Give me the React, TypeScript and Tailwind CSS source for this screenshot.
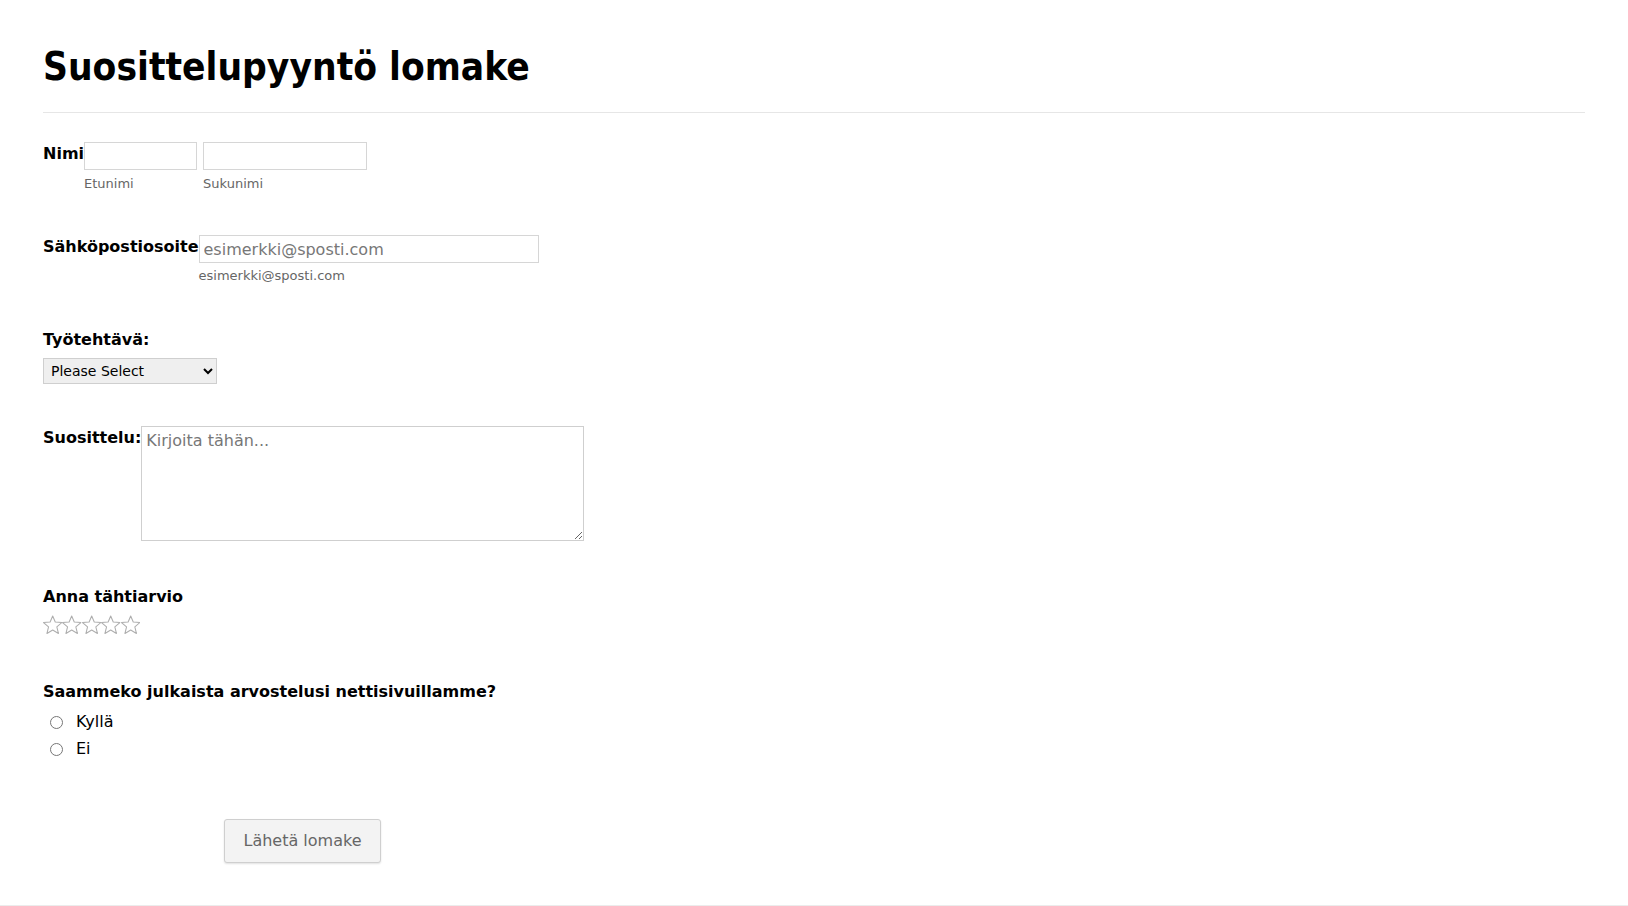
import React from "react";

function Star() {
  return (
    <svg width="19.4" height="20" viewBox="1 1 22 22" className="block">
      <path
        d="M12 1.8L14.9 8.6L22.4 9.2L16.7 14.2L18.5 21.6L12 17.7L5.5 21.6L7.3 14.2L1.6 9.2L9.1 8.6Z"
        fill="#fff"
        stroke="#aeaeae"
        strokeWidth="1.2"
        strokeLinejoin="round"
      />
    </svg>
  );
}

function App() {
  return (
    <div className="min-h-[906px] bg-white border-b border-[#ececec] px-[43px] text-black font-['DejaVu_Sans',sans-serif]">
      <h1 className="pt-[44px] text-[38.5px] leading-[46px] font-bold font-['DejaVu_Sans_Condensed','DejaVu_Sans',sans-serif] [font-stretch:semi-condensed]">
        Suosittelupyyntö lomake
      </h1>
      <div className="mt-[22px] h-px bg-[#e6e6e6]" />

      <form
        onSubmit={(e) => {
          e.preventDefault();
        }}
      >
        {/* nimi */}
        <div className="mt-[29px] flex items-start">
          <label className="pt-[2px] text-[16px] leading-[20px] font-bold">Nimi</label>
          <div className="flex flex-col">
            <input className="w-[113px] h-[28px] border border-[#d6d6d6] px-1 outline-none" />
            <span className="mt-[6px] text-[13px] leading-[16px] text-[#666]">Etunimi</span>
          </div>
          <div className="ml-[6px] flex flex-col">
            <input className="w-[164px] h-[28px] border border-[#d6d6d6] px-1 outline-none" />
            <span className="mt-[6px] text-[13px] leading-[16px] text-[#666]">Sukunimi</span>
          </div>
        </div>

        {/* sahkoposti */}
        <div className="mt-[43px] flex items-start">
          <label className="pt-[2px] text-[16px] leading-[20px] font-bold">Sähköpostiosoite</label>
          <div className="flex flex-col">
            <input
              type="email"
              placeholder="esimerkki@sposti.com"
              className="w-[340px] h-[28px] border border-[#d6d6d6] px-[4px] text-[16px] outline-none placeholder:text-[#777]"
            />
            <span className="mt-[5px] text-[13px] leading-[16px] text-[#666]">esimerkki@sposti.com</span>
          </div>
        </div>

        {/* tyotehtava */}
        <div className="mt-[46px]">
          <div className="text-[16px] leading-[20px] font-bold">Työtehtävä:</div>
          <select className="mt-[8px] w-[174px] h-[26px] border border-[#cfcfcf] bg-[#efefef] pl-[3px] text-[14px] text-black outline-none">
            <option>Please Select</option>
          </select>
        </div>

        {/* suosittelu */}
        <div className="mt-[42px] flex items-start">
          <label className="pt-[2px] text-[16px] leading-[20px] font-bold">Suosittelu:</label>
          <textarea
            placeholder="Kirjoita tähän..."
            className="w-[443px] h-[115px] border border-[#cfcfcf] px-[4px] py-[2px] text-[16px] outline-none placeholder:text-[#777]"
          />
        </div>

        {/* tahtiarvio */}
        <div className="mt-[46px]">
          <div className="text-[16px] leading-[20px] font-bold">Anna tähtiarvio</div>
          <div className="mt-[8px] flex">
            <Star />
            <Star />
            <Star />
            <Star />
            <Star />
          </div>
        </div>

        {/* julkaisu */}
        <div className="mt-[47px]">
          <div className="text-[16px] leading-[20px] font-bold">
            Saammeko julkaista arvostelusi nettisivuillamme?
          </div>
          <div className="mt-[10px] flex flex-col gap-[7px]">
            <label className="flex items-center text-[16px] leading-[20px]">
              <input type="radio" name="julkaisu" className="ml-[7px] mr-[13px] w-[13px] h-[13px]" />
              Kyllä
            </label>
            <label className="flex items-center text-[16px] leading-[20px]">
              <input type="radio" name="julkaisu" className="ml-[7px] mr-[13px] w-[13px] h-[13px]" />
              Ei
            </label>
          </div>
        </div>

        <div className="mt-[60px] pl-[181px]">
          <button className="w-[157px] h-[44px] border border-[#cfcfcf] rounded-[3px] bg-[#f3f3f3] text-[16px] text-[#666] shadow-[0_1px_2px_rgba(0,0,0,0.12)]">
            Lähetä lomake
          </button>
        </div>
      </form>
    </div>
  );
}

export default App;
